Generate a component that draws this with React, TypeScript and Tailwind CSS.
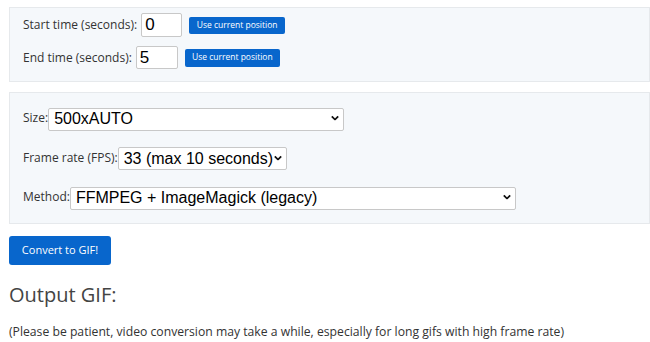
const labelFont = { fontFamily: '"Open Sans", sans-serif' };

const Chevron = () => (
  <svg
    viewBox="0 0 10 6"
    className="pointer-events-none absolute right-[5px] top-1/2 h-[5px] w-[8px] -translate-y-1/2"
  >
    <path d="M1 1l4 4 4-4" fill="none" stroke="#111" strokeWidth="2.2" />
  </svg>
);

const Select = ({ value, width }: { value: string; width: string }) => (
  <div className={`relative ${width}`}>
    <select
      className="h-[23px] w-full appearance-none rounded-[2px] border border-[#c8c8c8] bg-white pl-[5px] pr-[12px] text-[16px] leading-none text-black font-['Liberation_Sans',Arial,sans-serif]"
      defaultValue={value}
    >
      <option>{value}</option>
    </select>
    <Chevron />
  </div>
);

const App = () => {
  return (
    <div className="min-h-screen bg-white pl-[9px] pt-[7px] text-[#333]" style={labelFont}>
      {/* time range */}
      <div className="border border-[#e6e9ec] bg-[#f5f8fb] pb-[12px] pl-[13px] pt-[5px]">
        <div className="flex items-center">
          <span className="text-[12px]">Start time (seconds):</span>
          <input
            defaultValue="0"
            className="ml-[4px] h-[24px] w-[41px] rounded-[2px] border border-[#c8c8c8] bg-white pl-[3px] text-[17px] text-black font-['Liberation_Sans',Arial,sans-serif]"
          />
          <button className="ml-[7px] h-[17px] w-[96px] rounded-[2px] bg-[#0866cc] text-[8.5px] text-white">
            Use current position
          </button>
        </div>
        <div className="mt-[9px] flex items-center">
          <span className="text-[12px]">End time (seconds):</span>
          <input
            defaultValue="5"
            className="ml-[4px] h-[23px] w-[42px] rounded-[2px] border border-[#c8c8c8] bg-white pl-[3px] text-[17px] text-black font-['Liberation_Sans',Arial,sans-serif]"
          />
          <button className="ml-[7px] h-[18px] w-[95px] rounded-[2px] bg-[#0866cc] text-[8.5px] text-white">
            Use current position
          </button>
        </div>
      </div>

      {/* options */}
      <div className="mt-[10px] flex flex-col gap-[15px] border border-[#e6e9ec] bg-[#f5f8fb] pb-[13px] pl-[13px] pt-[13px]">
        <div className="flex items-center">
          <span className="text-[12px]">Size:</span>
          <Select value="500xAUTO" width="w-[296px]" />
        </div>
        <div className="flex items-center">
          <span className="text-[12px]">Frame rate (FPS):</span>
          <Select value="33 (max 10 seconds)" width="w-[169px]" />
        </div>
        <div className="flex items-center">
          <span className="text-[12px]">Method:</span>
          <Select value="FFMPEG + ImageMagick (legacy)" width="w-[446px]" />
        </div>
      </div>

      <button className="mt-[12px] h-[29px] w-[102px] rounded-[3px] bg-[#0866cc] text-[11px] text-white">
        Convert to GIF!
      </button>

      <h2 className="mt-[14px] text-[20px] leading-[32px] text-[#444]">Output GIF:</h2>
      <p className="mt-[12px] text-[12.2px] text-[#333]">
        (Please be patient, video conversion may take a while, especially for long gifs with high frame rate)
      </p>
    </div>
  );
};

export default App;
